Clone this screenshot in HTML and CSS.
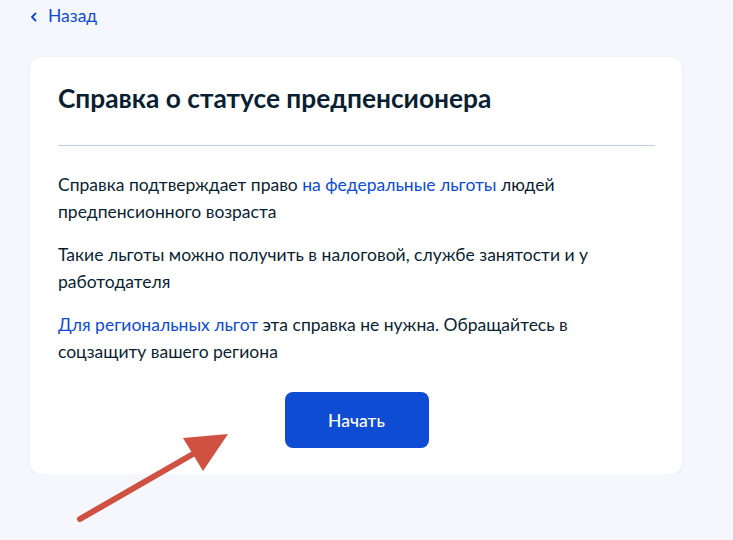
FILE: index.html
```html
<!DOCTYPE html>
<html lang="ru">
<head>
    <meta charset="UTF-8">
    <meta name="viewport" content="width=device-width, initial-scale=1.0">
    <title>Справка о статусе предпенсионера</title>
    <link rel="stylesheet" href="styles.css">
</head>
<body>
    <div class="page">
        <a class="back-link" href="#">
            <svg class="back-icon" width="8" height="10" viewBox="0 0 8 10">
                <path d="M5.5 1.5 L2 5 L5.5 8.5" fill="none" stroke="currentColor" stroke-width="1.8" stroke-linecap="round" stroke-linejoin="round"/>
            </svg>
            Назад
        </a>

        <div class="card">
            <h1>Справка о статусе предпенсионера</h1>
            <div class="divider"></div>

            <div class="card-text">
                <p>Справка подтверждает право <a href="#">на федеральные льготы</a> людей предпенсионного возраста</p>
                <p>Такие льготы можно получить в налоговой, службе занятости и у работодателя</p>
                <p><a href="#">Для региональных льгот</a> эта справка не нужна. Обращайтесь в соцзащиту вашего региона</p>
            </div>

            <div class="actions">
                <button class="btn-primary">Начать</button>
            </div>
        </div>
    </div>

    <!-- pointer arrow -->
    <svg class="pointer" width="733" height="540" viewBox="0 0 733 540">
        <line x1="80" y1="519" x2="200" y2="450" stroke="#d05142" stroke-width="6" stroke-linecap="round"/>
        <polygon points="228,434 183,438 203,471" fill="#d05142"/>
    </svg>
</body>
</html>
```

FILE: styles.css
```css
body {
    margin: 0;
    background: #f5f7fc;
    font-family: Lato, 'Noto Sans', sans-serif;
    color: #0b1f33;
}

.page {
    padding: 5px 30px 0;
    width: 652px;
}

a {
    color: #0d4cd3;
    text-decoration: none;
}

.back-link {
    display: inline-flex;
    align-items: center;
    gap: 10px;
    font-size: 17.5px;
    line-height: 22px;
}

.back-icon {
    margin-top: 1px;
}

.card {
    margin-top: 30px;
    background: #ffffff;
    border-radius: 12px;
    box-shadow: 0 1px 4px rgba(133, 150, 190, 0.12);
    padding: 24px 27px 26px 28px;
}

h1 {
    margin: 0;
    font-size: 26.3px;
    line-height: 34px;
    font-weight: 700;
}

.divider {
    height: 1px;
    background: #c2cde6;
    margin-top: 30px;
}

.card-text {
    max-width: 545px;
    padding-top: 25px;
}

.card-text p {
    margin: 0 0 16px;
    font-size: 17.5px;
    line-height: 27px;
}

.card-text p:last-child {
    margin-bottom: 0;
}

.actions {
    display: flex;
    justify-content: center;
    margin-top: 27px;
}

.btn-primary {
    width: 144px;
    height: 56px;
    border: none;
    border-radius: 8px;
    background: #0d4cd3;
    color: #ffffff;
    font-family: Lato, 'Noto Sans', sans-serif;
    font-size: 17.5px;
    font-weight: 500;
    cursor: pointer;
}

.pointer {
    position: absolute;
    left: 0;
    top: 0;
    pointer-events: none;
}
```
